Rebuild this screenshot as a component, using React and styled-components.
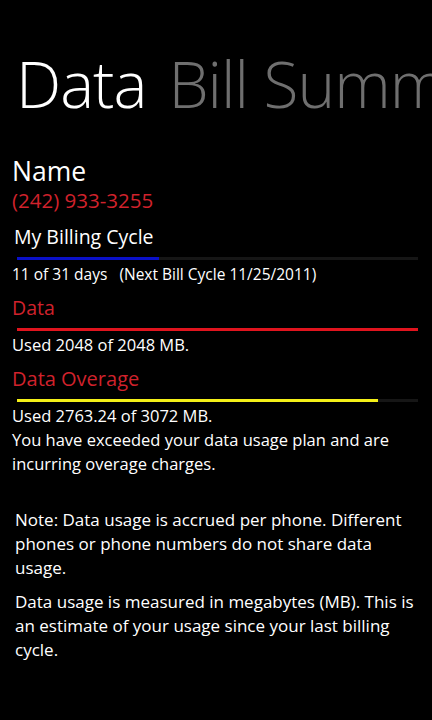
import React from "react"
import styled, { createGlobalStyle } from "styled-components"

const GlobalStyle = createGlobalStyle`
    html, body {
        margin: 0;
        padding: 0;
        background: #000;
    }
    body {
        font-family: "Open Sans", "Noto Sans", sans-serif;
        color: #fff;
    }
`

const Page = styled.div`
    width: 432px;
    height: 720px;
    background: #000;
    overflow: hidden;
`
const PivotHeader = styled.div`
    padding: 40px 0 0 16px;
    height: 88px;
    white-space: nowrap;
    overflow: hidden;
    font-size: 64px;
    font-weight: 300;
    line-height: 88px;
    letter-spacing: -1px;
`
const PivotItem = styled.span`
    color: ${props => (props.active ? "#fff" : "#6f6f6f")};
    margin-right: 22px;
`
const Content = styled.div`
    padding: 28px 14px 0 12px;
`
const Name = styled.div`
    font-size: 26.5px;
    line-height: 30px;
`
const Phone = styled.div`
    color: #d0222c;
    font-size: 20.5px;
    line-height: 24px;
    margin-top: 2px;
`
const SectionTitle = styled.div`
    color: ${props => props.color || "#fff"};
    font-size: ${props => props.size || 20}px;
    line-height: 26px;
    margin-top: ${props => props.top || 9}px;
    padding-left: ${props => props.indent || 0}px;
`
const Track = styled.div`
    height: 3px;
    margin: 7px 0 2px 5px;
    background: #161616;
`
const Fill = styled.div`
    height: 100%;
    background: ${props => props.color};
`
const Line = styled.div`
    font-size: ${props => props.size || 16.5}px;
    line-height: 24px;
    white-space: pre;
`
const Text = styled.p`
    margin: 0;
    font-size: ${props => props.size || 16.5}px;
    line-height: 24px;
`
const Notes = styled.div`
    margin-top: 32px;
    padding: 0 2px 0 3px;
    display: flex;
    flex-direction: column;
    gap: 10px;
`

const UsageBar = ({ color, percent }) => (
    <Track>
        <Fill color={color} style={{ width: percent + "%" }} />
    </Track>
)

export default function App() {
    return (
        <Page>
            <GlobalStyle />
            <PivotHeader>
                <PivotItem active>Data</PivotItem>
                <PivotItem>Bill Summary</PivotItem>
            </PivotHeader>
            <Content>
                <Name>Name</Name>
                <Phone>(242) 933-3255</Phone>
                <SectionTitle indent={2} top={12} size={19.5}>My Billing Cycle</SectionTitle>
                <UsageBar color="#0a10c8" percent={(11 / 31) * 100} />
                <Line size={15.5}>{"11 of 31 days   (Next Bill Cycle 11/25/2011)"}</Line>
                <SectionTitle color="#d0222c" size={19.5}>Data</SectionTitle>
                <UsageBar color="#e0141e" percent={100} />
                <Line>Used 2048 of 2048 MB.</Line>
                <SectionTitle color="#d0222c">Data Overage</SectionTitle>
                <UsageBar color="#f4f018" percent={(2763.24 / 3072) * 100} />
                <Line>Used 2763.24 of 3072 MB.</Line>
                <Text>You have exceeded your data usage plan and are incurring overage charges.</Text>
                <Notes>
                    <Text size={17}>Note: Data usage is accrued per phone. Different phones or phone numbers do not share data usage.</Text>
                    <Text size={17}>Data usage is measured in megabytes (MB). This is an estimate of your usage since your last billing cycle.</Text>
                </Notes>
            </Content>
        </Page>
    )
}
